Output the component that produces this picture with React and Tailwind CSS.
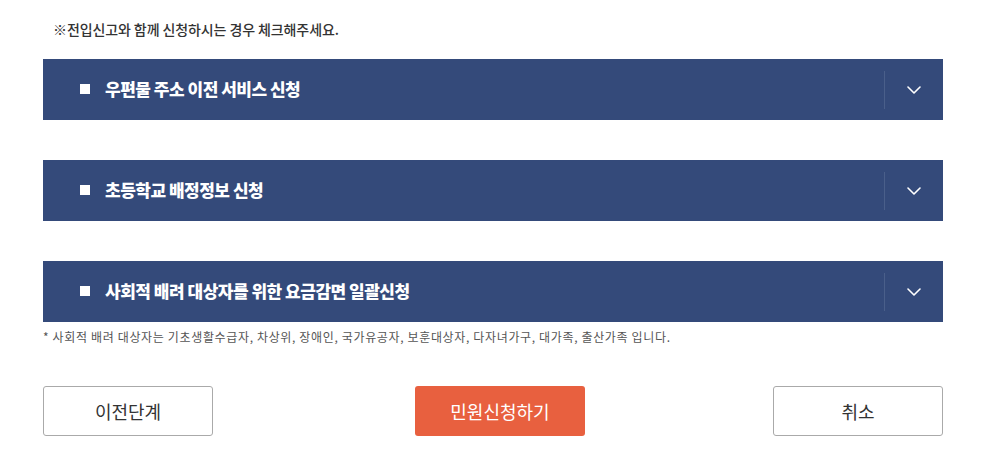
import React from 'react';

const sections = [
  '우편물 주소 이전 서비스 신청',
  '초등학교 배정정보 신청',
  '사회적 배려 대상자를 위한 요금감면 일괄신청',
];

const Chevron = () => (
  <svg width="14" height="8" viewBox="0 0 14 8" fill="none">
    <path d="M1 1l6 6 6-6" stroke="#fff" strokeWidth="1.6" strokeLinecap="round" strokeLinejoin="round" />
  </svg>
);

const SectionBar = ({ title }) => (
  <div className="flex h-[61px] items-center bg-[#344a7a] text-white">
    <div className="flex flex-1 items-center pl-[37px] pb-[2px]">
      <span className="inline-block h-[10px] w-[10px] bg-white" />
      <span className="ml-[15px] text-[17px] font-extrabold tracking-[-0.5px]">{title}</span>
    </div>
    <div className="h-[38px] w-px bg-[#4a5f8a]" />
    <div className="flex w-[58px] items-center justify-center">
      <Chevron />
    </div>
  </div>
);

export default function App() {
  return (
    <div
      className="h-[454px] w-[993px] bg-white"
      style={{ fontFamily: '"Noto Sans CJK KR", "Noto Sans", sans-serif' }}
    >
      <div className="mx-[43px] w-[900px]">
        <p className="pt-[19px] pl-[10px] text-[14px] font-medium leading-[20px] tracking-[-0.1px] text-[#333]">
          ※전입신고와 함께 신청하시는 경우 체크해주세요.
        </p>
        <div className="mt-[20px] flex flex-col gap-[40px]">
          {sections.map((s) => (
            <SectionBar key={s} title={s} />
          ))}
        </div>
        <p className="mt-[6px] text-[12px] leading-[18px] tracking-[0.65px] text-[#555]">
          * 사회적 배려 대상자는 기초생활수급자, 차상위, 장애인, 국가유공자, 보훈대상자, 다자녀가구, 대가족, 출산가족 입니다.
        </p>
        <div className="mt-[40px] flex items-center">
          <button className="h-[50px] w-[170px] rounded-[3px] border border-[#aaa] bg-white text-[18px] text-[#333]">
            이전단계
          </button>
          <button className="ml-[202px] h-[50px] w-[170px] rounded-[3px] bg-[#e8603f] text-[18px] text-white">
            민원신청하기
          </button>
          <button className="ml-auto h-[50px] w-[170px] rounded-[3px] border border-[#aaa] bg-white text-[18px] text-[#333]">
            취소
          </button>
        </div>
      </div>
    </div>
  );
}
